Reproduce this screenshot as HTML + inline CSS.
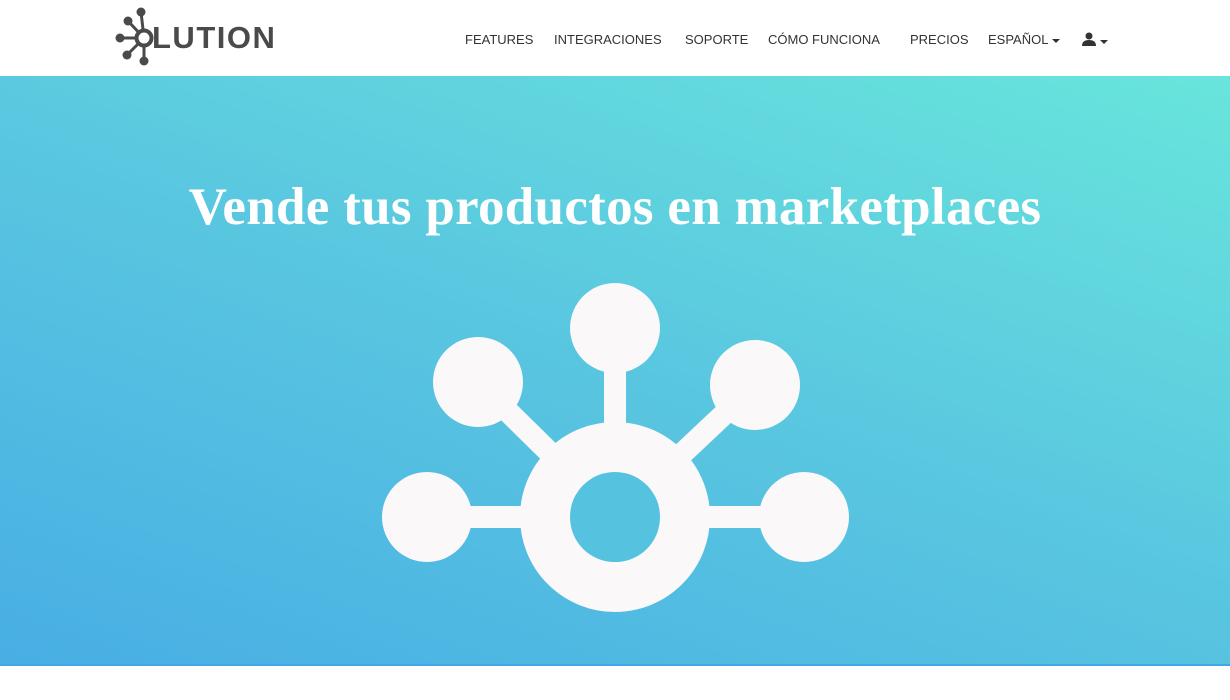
<!DOCTYPE html>
<html><head><meta charset="utf-8"><style>
*{margin:0;padding:0;box-sizing:border-box}
body{width:1230px;height:700px;overflow:hidden;background:#fff;font-family:"Liberation Sans",sans-serif;position:relative}
.nav{position:absolute;top:0;left:0;width:1230px;height:76px;background:#fff}
.nav a{position:absolute;top:32px;font-size:13px;color:#333;text-decoration:none}
.logo{position:absolute;left:152px;top:20px;font-size:31px;font-weight:bold;color:#4a4a4a;letter-spacing:1.5px}
.hero{position:absolute;top:76px;left:0;width:1230px;height:590px;background:linear-gradient(20deg,#48aee4 0%,#59c6e0 50%,#68e5dc 100%);border-bottom:2px solid #3ea8e8}
h1{position:absolute;top:177px;left:0;width:1230px;text-align:center;color:#fff;font-family:"Liberation Serif",serif;font-weight:bold;font-size:53px;letter-spacing:0.3px}
.caret{display:inline-block;width:0;height:0;border-left:4px solid transparent;border-right:4px solid transparent;border-top:4px solid #333;vertical-align:middle;margin-left:4px}
</style></head><body>
<div class="nav">
<svg style="position:absolute;left:105px;top:5px" width="50" height="65" viewBox="100 5 50 65">
<g fill="#4a4a4a" stroke="#4a4a4a" stroke-width="3">
<line x1="139" y1="38" x2="136" y2="12"/><line x1="139" y1="38" x2="123" y2="21"/><line x1="139" y1="38" x2="115" y2="38"/><line x1="139" y1="38" x2="122" y2="55"/><line x1="139" y1="38" x2="139" y2="61"/>
</g>
<g fill="#4a4a4a"><circle cx="136" cy="12" r="4.5"/><circle cx="123" cy="21" r="4.5"/><circle cx="115" cy="38" r="4.5"/><circle cx="122" cy="55" r="4.5"/><circle cx="139" cy="61" r="4.5"/></g>
<circle cx="139" cy="38" r="7.5" fill="#fff" stroke="#4a4a4a" stroke-width="4"/>
</svg>
<div class="logo">LUTION</div>
<a style="left:465px">FEATURES</a>
<a style="left:554px">INTEGRACIONES</a>
<a style="left:685px">SOPORTE</a>
<a style="left:768px">CÓMO FUNCIONA</a>
<a style="left:910px">PRECIOS</a>
<a style="left:988px">ESPAÑOL<span class="caret"></span></a>
<a style="left:1082px"><svg width="14" height="14" viewBox="0 0 14 14" style="vertical-align:-1px"><circle cx="7" cy="4" r="3.5" fill="#333"/><path d="M0 14 Q0 8 7 8 Q14 8 14 14Z" fill="#333"/></svg><span class="caret"></span></a>
</div>
<div class="hero"></div>
<h1>Vende tus productos en marketplaces</h1>
<svg style="position:absolute;left:0;top:0" width="1230" height="700">
<g stroke="#faf8f9" stroke-width="22">
<line x1="615" y1="517" x2="615" y2="328"/><line x1="615" y1="517" x2="478" y2="382"/><line x1="615" y1="517" x2="755" y2="385"/><line x1="427" y1="517" x2="804" y2="517"/>
</g>
<g fill="#faf8f9"><circle cx="615" cy="328" r="45"/><circle cx="478" cy="382" r="45"/><circle cx="755" cy="385" r="45"/><circle cx="427" cy="517" r="45"/><circle cx="804" cy="517" r="45"/></g>
<circle cx="615" cy="517" r="70" fill="none" stroke="#faf8f9" stroke-width="50"/>
<circle cx="615" cy="517" r="45" fill="#55c2e0"/>
</svg>
</body></html>
